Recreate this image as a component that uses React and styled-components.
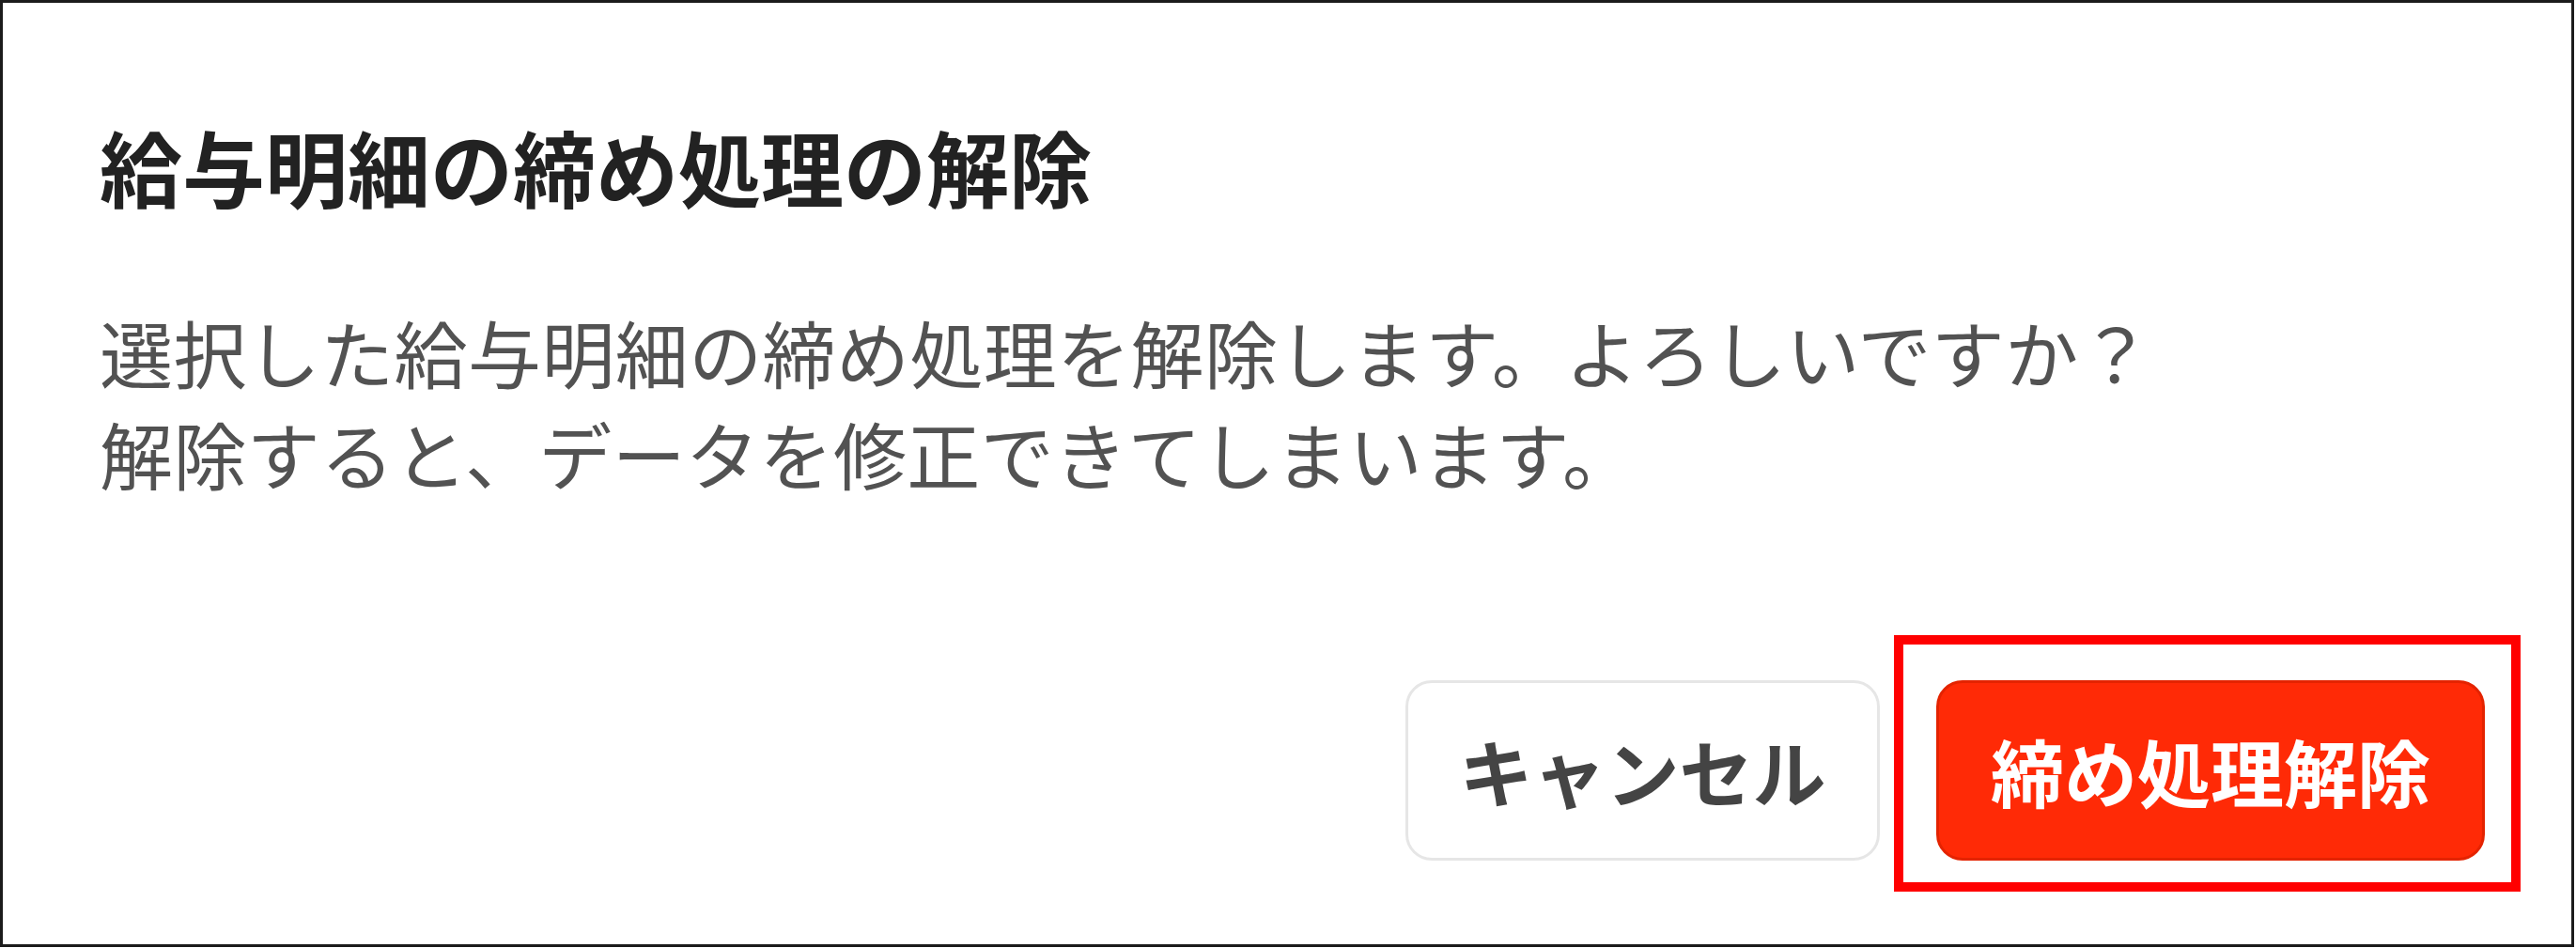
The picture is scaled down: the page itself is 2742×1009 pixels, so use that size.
import React from 'react'
import styled, { createGlobalStyle } from 'styled-components'

const GlobalStyle = createGlobalStyle`
  * {
    box-sizing: border-box;
  }
  body {
    margin: 0;
    background: #ffffff;
    font-family: 'Noto Sans CJK JP', 'Noto Sans', sans-serif;
  }
`

const Frame = styled.div`
  width: 2740px;
  height: 1008px;
  border: 3px solid #1c1c1c;
  background: #ffffff;
  padding: 107px 92px 0 103px;
  display: flex;
  flex-direction: column;
`

const Title = styled.h2`
  margin: 0;
  font-size: 88px;
  line-height: 132px;
  font-weight: 700;
  color: #222222;
`

const Message = styled.p`
  margin: 78px 0 0;
  font-size: 78px;
  letter-spacing: 0.4px;
  line-height: 108px;
  font-weight: 400;
  color: #525252;
`

const Actions = styled.div`
  margin-top: 188px;
  display: flex;
  justify-content: flex-end;
  gap: 60px;
`

const Button = styled.button`
  height: 192px;
  width: ${(p) => p.$width}px;
  padding: 0;
  border-radius: 28px;
  font-family: inherit;
  font-size: 78px;
  font-weight: 700;
  line-height: 1;
  cursor: pointer;
  border: 3px solid ${(p) => (p.$danger ? '#e42300' : '#e6e6e6')};
  background: ${(p) => (p.$danger ? '#ff2a06' : '#ffffff')};
  color: ${(p) => (p.$danger ? '#ffffff' : '#444444')};
`

const Highlight = styled.div`
  position: relative;
  display: flex;

  &::after {
    content: '';
    position: absolute;
    left: -45px;
    right: -38px;
    top: -48px;
    bottom: -33px;
    border: 10px solid #ff0000;
    pointer-events: none;
  }
`

const App = () => {
  return (
    <>
      <GlobalStyle />
      <Frame>
        <Title>給与明細の締め処理の解除</Title>
        <Message>
          選択した給与明細の締め処理を解除します。よろしいですか？
          <br />
          解除すると、データを修正できてしまいます。
        </Message>
        <Actions>
          <Button $width={505}>キャンセル</Button>
          <Highlight>
            <Button $width={584} $danger>
              締め処理解除
            </Button>
          </Highlight>
        </Actions>
      </Frame>
    </>
  )
}

export default App
